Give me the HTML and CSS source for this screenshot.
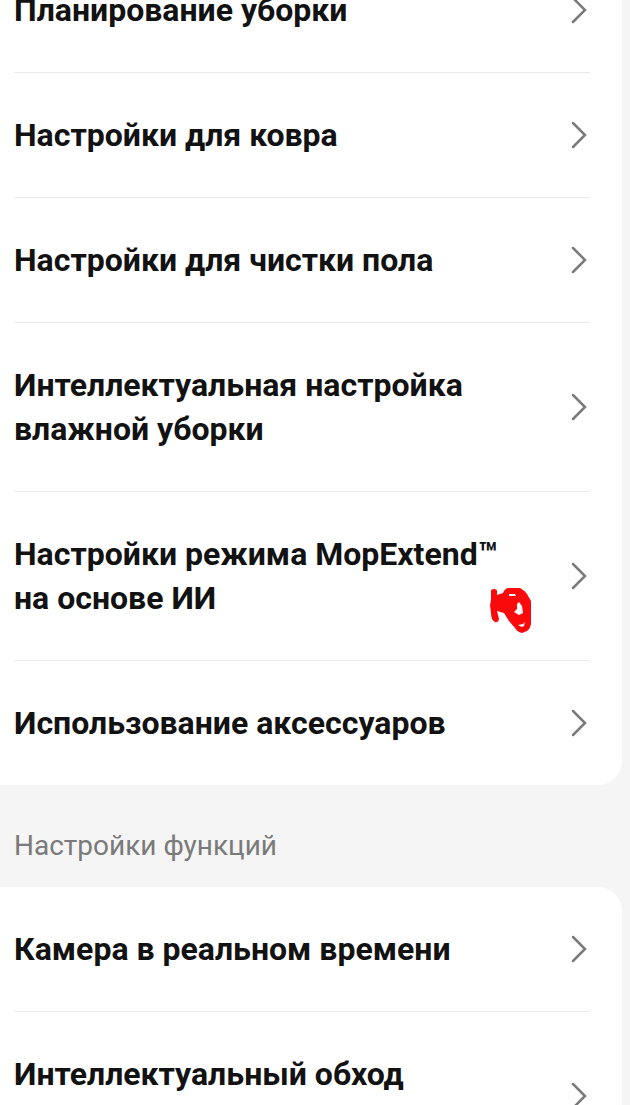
FILE: index.html
```html
<!DOCTYPE html>
<html lang="ru">
<head>
    <meta charset="UTF-8">
    <meta name="viewport" content="width=device-width, initial-scale=1.0">
    <title>Настройки</title>
    <link rel="stylesheet" href="styles.css">
</head>
<body>
    <svg class="sprite" aria-hidden="true">
        <symbol id="chevron" viewBox="0 0 16 28">
            <path d="M2 2 14 14 2 26" fill="none" stroke="#7a7a7a" stroke-width="2.5" stroke-linecap="round"/>
        </symbol>
    </svg>

    <main class="page">
        <!-- Настройки уборки -->
        <nav class="card card-first">
            <a class="row" href="#">
                <span class="row-title">Планирование уборки</span>
                <svg class="chevron"><use href="#chevron"/></svg>
            </a>
            <a class="row" href="#">
                <span class="row-title">Настройки для ковра</span>
                <svg class="chevron"><use href="#chevron"/></svg>
            </a>
            <a class="row" href="#">
                <span class="row-title">Настройки для чистки пола</span>
                <svg class="chevron"><use href="#chevron"/></svg>
            </a>
            <a class="row" href="#">
                <span class="row-title">Интеллектуальная настройка влажной уборки</span>
                <svg class="chevron"><use href="#chevron"/></svg>
            </a>
            <a class="row" href="#">
                <span class="row-title">Настройки режима MopExtend™ на основе ИИ</span>
                <svg class="scribble" viewBox="0 0 42 46" aria-hidden="true">
                    <path fill="#fa0a0a" fill-rule="evenodd" d="M1 4Q1 2 4 2T7 4V8L13 6Q15 1 19 1H30Q34 3 37 7L41 14V37Q40 42 37 44L32 46Q27 45 25 41L19 34 14 26 7 24 9 32Q8 36 5 35 1 33 1 26L0 18 1 13ZM19 7H25L26 9H19ZM29 15 32 19 33 26 29 28 24 25 27 22 27 17ZM28 38 33 37 35 35 34 39 32 40Z"/>
                </svg>
                <svg class="chevron"><use href="#chevron"/></svg>
            </a>
            <a class="row" href="#">
                <span class="row-title">Использование аксессуаров</span>
                <svg class="chevron"><use href="#chevron"/></svg>
            </a>
        </nav>

        <!-- Настройки функций -->
        <h2 class="section-title">Настройки функций</h2>
        <nav class="card">
            <a class="row" href="#">
                <span class="row-title">Камера в реальном времени</span>
                <svg class="chevron"><use href="#chevron"/></svg>
            </a>
            <a class="row" href="#">
                <span class="row-title">Интеллектуальный обход препятствий</span>
                <svg class="chevron"><use href="#chevron"/></svg>
            </a>
        </nav>
    </main>
</body>
</html>
```

FILE: styles.css
```css
* {
    box-sizing: border-box;
}
html {
    height: 100%;
    overflow: hidden;
}
body {
    height: 100%;
    margin: 0;
    overflow: hidden;
    background-color: #f5f5f5;
    color: #121212;
    font-family: Roboto, "Noto Sans", sans-serif;
}
.sprite {
    display: none;
}
.page {
    padding-right: 8px;
}
.card {
    padding: 0 32px 0 14px;
    background-color: #fff;
    border-radius: 0 24px 24px 0;
}
.card-first {
    margin-top: -52px;
    border-top-right-radius: 0;
}
.row {
    position: relative;
    display: flex;
    align-items: center;
    justify-content: space-between;
    padding: 40px 3px 40px 0;
    border-bottom: 1px solid #e9e9e9;
    color: inherit;
    text-decoration: none;
}
.row:last-child {
    border-bottom: none;
}
.row-title {
    max-width: 500px;
    font-size: 32px;
    font-weight: 700;
    line-height: 44px;
}
.chevron {
    flex: none;
    width: 16px;
    height: 28px;
}
/* Пометка от руки поверх строки */
.scribble {
    position: absolute;
    right: 58px;
    bottom: 27px;
    width: 42px;
    height: 46px;
}
.section-title {
    margin: 0;
    padding: 40px 14px 20px;
    color: #7a7a7a;
    font-size: 28px;
    font-weight: 400;
    line-height: 42px;
}
```
